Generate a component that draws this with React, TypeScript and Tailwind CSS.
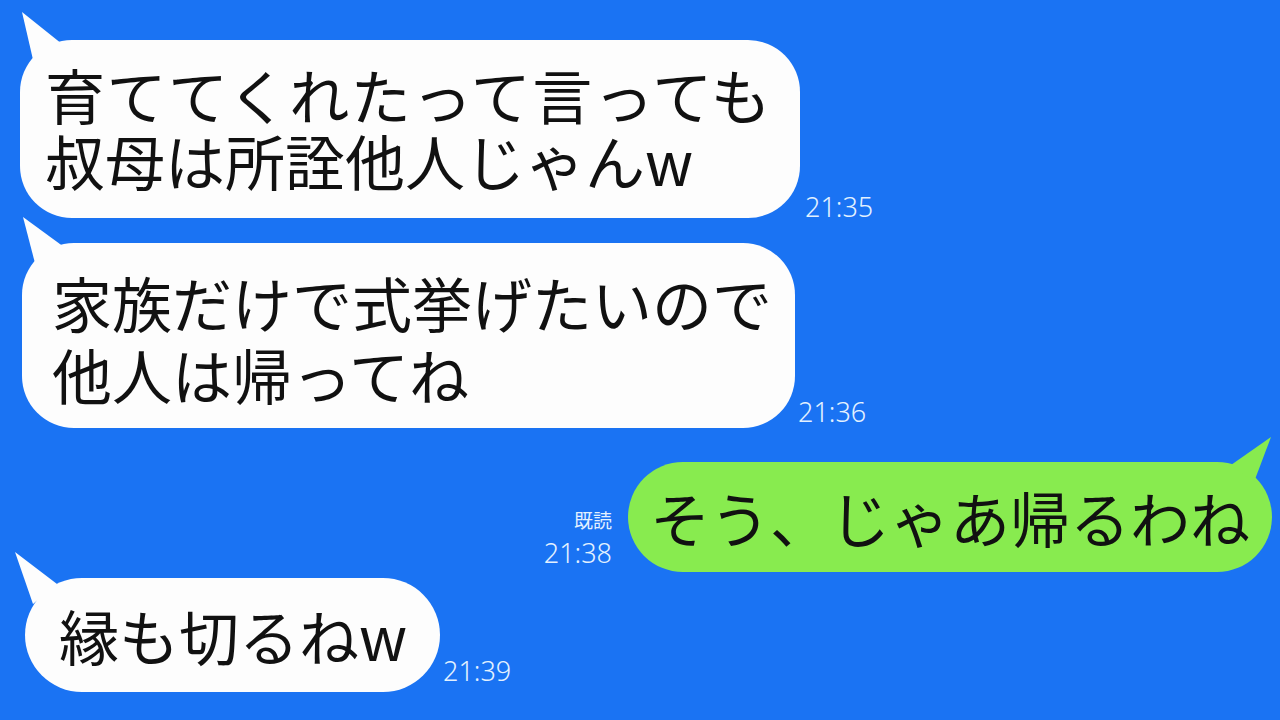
import React from "react";

const jp = { fontFamily: '"Noto Sans CJK JP", "Noto Sans", sans-serif' };

function TailLeft({ color, pts }: { color: string; pts: string }) {
  return (
    <svg className="absolute left-0 top-0 overflow-visible" width="1" height="1" style={{ overflow: "visible" }}>
      <polygon points={pts} fill={color} />
    </svg>
  );
}

export default function App() {
  return (
    <div className="w-[1280px] h-[720px] bg-[#1a73f3] overflow-hidden flex flex-col" style={jp}>
      {/* Message 1 */}
      <div className="flex items-end mt-[40px] ml-[20px]">
        <div className="relative w-[780px] h-[178px] bg-[#fdfdfd] rounded-[52px] pl-[25px] pt-[21px]">
          <TailLeft color="#fdfdfd" pts="2,-28 42,4 14,24" />
          <div className="relative text-[60px] leading-[66px] text-[#111] whitespace-nowrap">
            <div className="tracking-[1.5px]">育ててくれたって言っても</div>
            <div>叔母は所詮他人じゃんw</div>
          </div>
        </div>
        <div className="ml-[5px] mb-[-3px] text-[27px] leading-[28px] text-[#e3f1ff] font-light" style={{ fontFamily: '"Noto Sans", sans-serif' }}>
          21:35
        </div>
      </div>

      {/* Message 2 */}
      <div className="flex items-end mt-[25px] ml-[22px]">
        <div className="relative w-[773px] h-[185px] bg-[#fdfdfd] rounded-[52px] pl-[30px] pt-[23px]">
          <TailLeft color="#fdfdfd" pts="1,-26 42,4 14,24" />
          <div className="relative text-[60px] leading-[72px] text-[#111] whitespace-nowrap">
            <div>家族だけで式挙げたいので</div>
            <div>他人は帰ってね</div>
          </div>
        </div>
        <div className="ml-[3px] mb-[2px] text-[27px] leading-[28px] text-[#e3f1ff] font-light" style={{ fontFamily: '"Noto Sans", sans-serif' }}>
          21:36
        </div>
      </div>

      {/* Message 3 (mine) */}
      <div className="flex items-end justify-end mt-[34px] mr-[8px]">
        <div className="mr-[16px] mb-[5px] flex flex-col items-end text-[#e3f1ff]">
          <div className="text-[19px] leading-[22px]">既読</div>
          <div className="mt-[8px] text-[27px] leading-[28px] font-light" style={{ fontFamily: '"Noto Sans", sans-serif' }}>
            21:38
          </div>
        </div>
        <div className="relative w-[644px] h-[110px] bg-[#88eb4f] rounded-[55px] pl-[22px] flex items-center">
          <svg className="absolute right-0 top-0" width="1" height="1" style={{ overflow: "visible" }}>
            <polygon points="0,-25 -40,3 -17,20" fill="#88eb4f" />
          </svg>
          <div className="relative text-[60px] leading-[66px] text-[#111] whitespace-nowrap">そう、じゃあ帰るわね</div>
        </div>
      </div>

      {/* Message 4 */}
      <div className="flex items-end mt-[6px] ml-[25px]">
        <div className="relative w-[415px] h-[114px] bg-[#fdfdfd] rounded-[57px] pl-[34px] flex items-center">
          <TailLeft color="#fdfdfd" pts="-10,-26 32,6 8,26" />
          <div className="relative text-[60px] leading-[66px] text-[#111] whitespace-nowrap">縁も切るねw</div>
        </div>
        <div className="ml-[3px] mb-[7px] text-[27px] leading-[28px] text-[#e3f1ff] font-light" style={{ fontFamily: '"Noto Sans", sans-serif' }}>
          21:39
        </div>
      </div>
    </div>
  );
}
